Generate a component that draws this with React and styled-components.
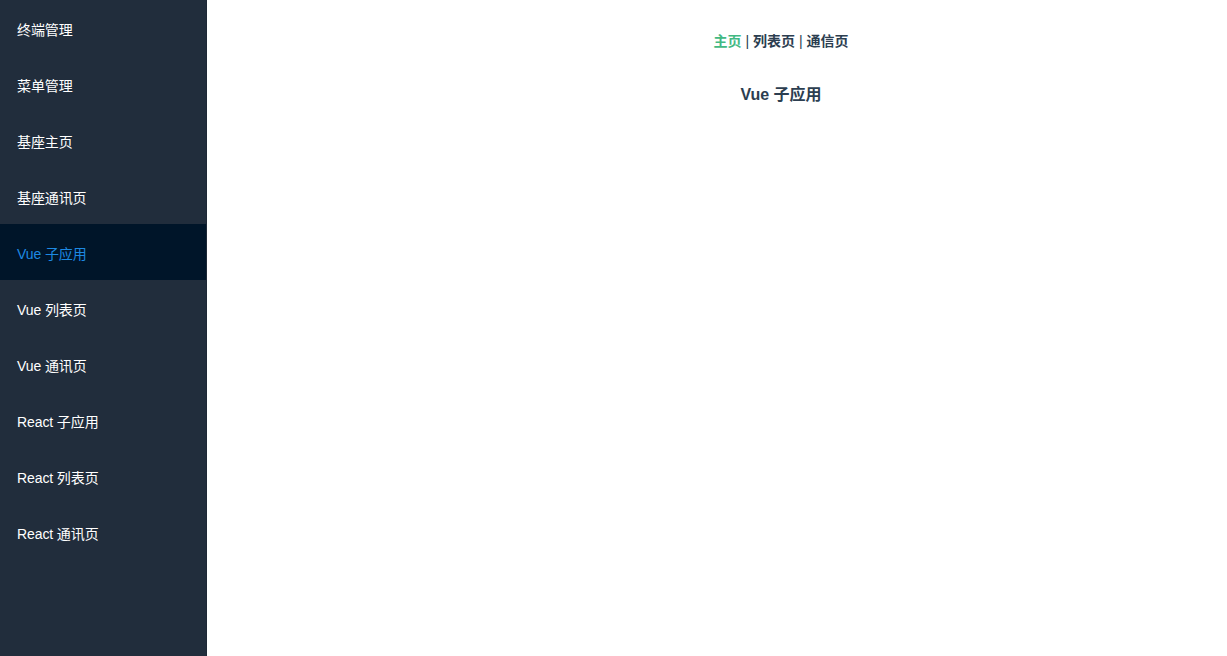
import React from "react";
import styled, { createGlobalStyle } from "styled-components";

const GlobalStyle = createGlobalStyle`
  html, body {
    margin: 0;
    padding: 0;
    height: 100%;
    background: #fff;
    font-family: "Liberation Sans", Arial, "Noto Sans CJK SC", sans-serif;
  }
  #root {
    height: 100%;
  }
`;

const Layout = styled.div`
  display: flex;
  height: 100vh;
`;

const Sidebar = styled.aside`
  width: 206px;
  flex-shrink: 0;
  background: #212d3c;
  border-right: 1px solid #1d2836;
`;

const MenuItem = styled.div`
  height: 56px;
  display: flex;
  align-items: center;
  padding: 1px 0 0 17px;
  box-sizing: border-box;
  font-size: 14px;
  letter-spacing: -0.1px;
  color: ${({ active }) => (active ? "#1d89e2" : "#fff")};
  background: ${({ active }) => (active ? "#001529" : "transparent")};
  cursor: pointer;
`;

const Main = styled.main`
  flex: 1;
  padding-left: 128px;
  text-align: center;
  color: #2c3e50;
`;

const Nav = styled.nav`
  padding: 33px 0 0;
  font-size: 14px;
  line-height: 16px;
  color: #2c3e50;
`;

const NavLink = styled.a`
  font-weight: bold;
  color: ${({ active }) => (active ? "#42b983" : "#2c3e50")};
  text-decoration: none;
`;

const Title = styled.h3`
  margin: 36px 0 0;
  font-size: 16px;
  line-height: 19px;
  font-weight: bold;
  color: #2c3e50;
`;

const menu = [
  "终端管理",
  "菜单管理",
  "基座主页",
  "基座通讯页",
  "Vue 子应用",
  "Vue 列表页",
  "Vue 通讯页",
  "React 子应用",
  "React 列表页",
  "React 通讯页",
];

export default function App() {
  return (
    <>
      <GlobalStyle />
      <Layout>
        <Sidebar>
          {menu.map((item) => (
            <MenuItem key={item} active={item === "Vue 子应用"}>
              {item}
            </MenuItem>
          ))}
        </Sidebar>
        <Main>
          <Nav>
            <NavLink active>主页</NavLink> | <NavLink>列表页</NavLink> |{" "}
            <NavLink>通信页</NavLink>
          </Nav>
          <Title>Vue 子应用</Title>
        </Main>
      </Layout>
    </>
  );
}
